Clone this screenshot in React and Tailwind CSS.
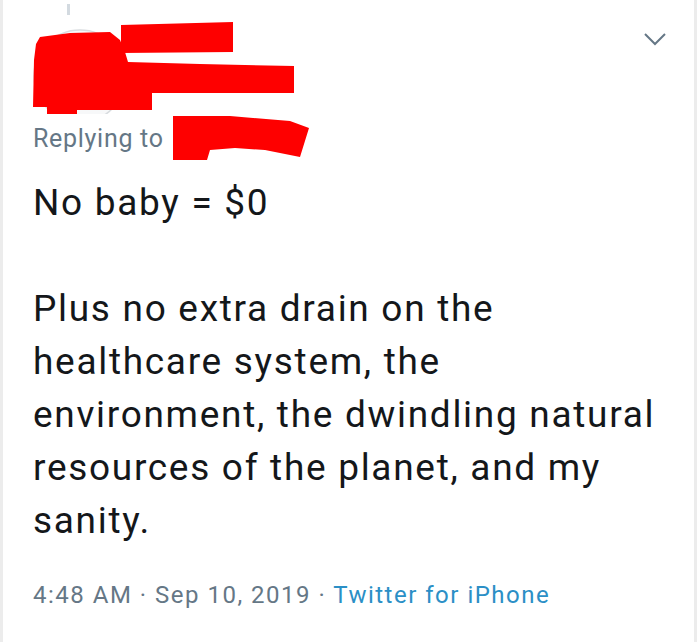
import React from 'react';

const Tweet = () => {
  return (
    <div className="w-[700px] h-[642px] bg-white pr-[3px] flex font-['Roboto',sans-serif]">
      <div className="flex-1 border-l-[3px] border-r-[3px] border-[#ececec] flex flex-col">
        {/* Header: redacted avatar, name and menu chevron */}
        <svg width="691" height="114" viewBox="3 0 691 114" className="block">
          <rect x="67" y="4" width="3" height="11" fill="#d3dae0" />
          <circle cx="80" cy="76" r="46" fill="#f7f8f9" stroke="#d8dcdf" strokeWidth="1.5" />
          <polygon
            points="40,37 70,33 110,32 120,40 125,52 128,62 200,64 294,66 294,93 152,93 152,110 77,110 77,115 47,115 47,107 33,107 34,60 36,44"
            fill="#fe0000"
          />
          <polygon points="121,25 233,22 233,52 121,53" fill="#fe0000" />
          <polyline points="645,34 655,44 665,34" fill="none" stroke="#657786" strokeWidth="2" />
        </svg>

        {/* Replying to */}
        <div className="flex items-center h-[48px]">
          <span className="pl-[30px] w-[161px] text-[25px] tracking-[0.7px] text-[#657786] leading-none">Replying to</span>
          <svg width="146" height="48" viewBox="164 114 146 48" className="block">
            <polygon
              points="173,116 230,116 290,121 309,128 300,157 265,150 235,148 210,150 207,160 173,160"
              fill="#fe0000"
            />
          </svg>
        </div>

        {/* Tweet body */}
        <p className="mt-[14px] pl-[30px] text-[37px] tracking-[1.7px] leading-[53px] text-[#14171a]">
          No baby = $0
          <br />
          <br />
          Plus no extra drain on the
          <br />
          healthcare system, the
          <br />
          environment, the dwindling natural
          <br />
          resources of the planet, and my
          <br />
          sanity.
        </p>

        {/* Meta */}
        <div className="mt-[32px] pl-[30px] text-[24px] tracking-[1.5px] leading-[32px] text-[#657786]">
          4:48 AM · Sep 10, 2019 · <span className="text-[#2b8fc6]">Twitter for iPhone</span>
        </div>
      </div>
    </div>
  );
};

export default function App() {
  return <Tweet />;
}
